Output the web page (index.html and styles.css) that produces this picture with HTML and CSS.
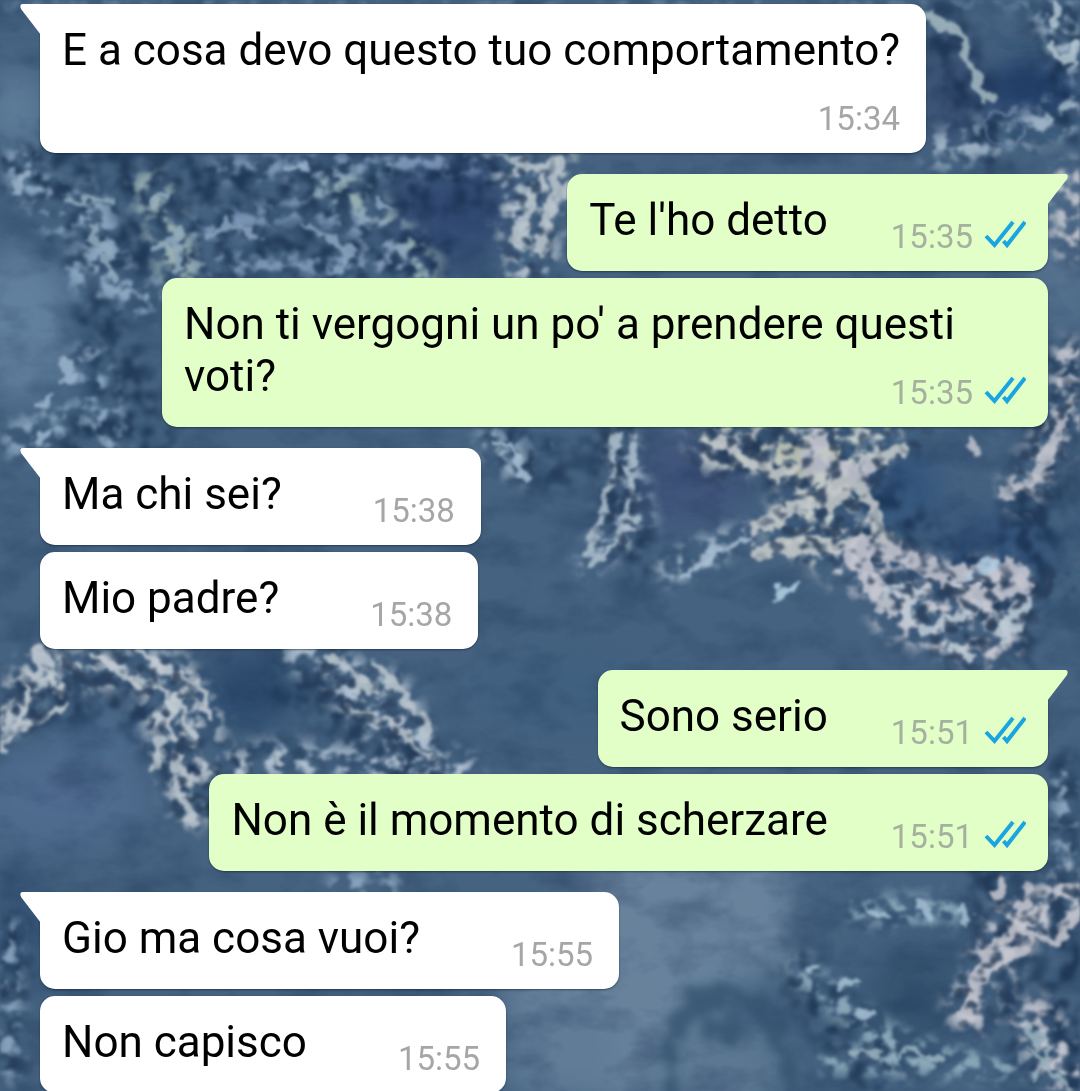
FILE: index.html
```html
<!DOCTYPE html>
<html lang="it">
<head>
<meta charset="utf-8">
<meta name="viewport" content="width=device-width, initial-scale=1">
<title>Chat</title>
<link rel="stylesheet" href="styles.css">
</head>
<body>
<svg class="wallpaper" viewBox="0 0 1080 1091" preserveAspectRatio="xMidYMid slice" aria-hidden="true">
  <defs>
    <filter id="soft" x="-30%" y="-30%" width="160%" height="160%"><feGaussianBlur stdDeviation="16"/></filter>
    <filter id="water" x="0" y="0" width="100%" height="100%" color-interpolation-filters="sRGB">
      <feTurbulence type="fractalNoise" baseFrequency="0.018 0.03" numOctaves="4" seed="4"/>
      <feColorMatrix values="0 0 0 0 0.09  0 0 0 0 0.18  0 0 0 0 0.32  2.6 0 0 0 -1.15"/>
    </filter>
    <filter id="flecks" filterUnits="userSpaceOnUse" x="0" y="0" width="1080" height="1091" color-interpolation-filters="sRGB">
      <feGaussianBlur in="SourceGraphic" stdDeviation="8" result="area"/>
      <feTurbulence type="fractalNoise" baseFrequency="0.06 0.07" numOctaves="3" seed="11"/>
      <feColorMatrix values="0 0 0 0 1  0 0 0 0 1  0 0 0 0 1  0 5.5 0 0 -2.6" result="mask"/>
      <feComposite in="area" in2="mask" operator="in"/>
      <feGaussianBlur stdDeviation="1.6"/>
    </filter>
    <filter id="shade" filterUnits="userSpaceOnUse" x="0" y="0" width="1080" height="1091" color-interpolation-filters="sRGB">
      <feGaussianBlur in="SourceGraphic" stdDeviation="10" result="area"/>
      <feTurbulence type="fractalNoise" baseFrequency="0.06 0.055" numOctaves="3" seed="29"/>
      <feColorMatrix values="0 0 0 0 1  0 0 0 0 1  0 0 0 0 1  0 4 0 0 -1.6" result="mask"/>
      <feComposite in="area" in2="mask" operator="in"/>
      <feGaussianBlur stdDeviation="2"/>
    </filter>
    <filter id="hollows" filterUnits="userSpaceOnUse" x="0" y="0" width="1080" height="1091" color-interpolation-filters="sRGB">
      <feGaussianBlur in="SourceGraphic" stdDeviation="8" result="area"/>
      <feTurbulence type="fractalNoise" baseFrequency="0.07 0.08" numOctaves="2" seed="52"/>
      <feColorMatrix values="0 0 0 0 1  0 0 0 0 1  0 0 0 0 1  0 7 0 0 -3.6" result="mask"/>
      <feComposite in="area" in2="mask" operator="in"/>
      <feGaussianBlur stdDeviation="1.6"/>
    </filter>
    <filter id="foam" filterUnits="userSpaceOnUse" x="0" y="0" width="1080" height="1091" color-interpolation-filters="sRGB">
      <feTurbulence type="fractalNoise" baseFrequency="0.06" numOctaves="3" seed="7" result="n"/>
      <feDisplacementMap in="SourceGraphic" in2="n" scale="24" xChannelSelector="R" yChannelSelector="G"/>
      <feGaussianBlur stdDeviation="1.8"/>
    </filter>
    <filter id="ring" x="-30%" y="-30%" width="160%" height="160%">
      <feTurbulence type="fractalNoise" baseFrequency="0.04" numOctaves="3" seed="3" result="n"/>
      <feDisplacementMap in="SourceGraphic" in2="n" scale="40" xChannelSelector="R" yChannelSelector="G"/>
      <feGaussianBlur stdDeviation="5"/>
    </filter>
  </defs>

  <rect width="1080" height="1091" fill="#456280"/>
  <g filter="url(#soft)">
    <ellipse cx="20" cy="325" rx="55" ry="75" fill="#61809d"/>
    <ellipse cx="15" cy="110" rx="35" ry="40" fill="#5c7b98"/>
    <ellipse cx="690" cy="480" rx="60" ry="50" fill="#40547a"/>
    <ellipse cx="450" cy="210" rx="60" ry="60" fill="#364d74"/>
    <ellipse cx="890" cy="490" rx="55" ry="45" fill="#34577d"/>
    <ellipse cx="1000" cy="550" rx="60" ry="40" fill="#34557a"/>
    <ellipse cx="1060" cy="260" rx="30" ry="90" fill="#55718e"/>
    <ellipse cx="1030" cy="90" rx="50" ry="25" fill="#243c6b"/>
    <ellipse cx="950" cy="90" rx="30" ry="60" fill="#3a5174"/>
    <ellipse cx="60" cy="800" rx="90" ry="50" fill="#506b8e"/>
    <ellipse cx="105" cy="740" rx="50" ry="28" fill="#4b6a8c"/>
    <ellipse cx="250" cy="690" rx="45" ry="40" fill="#294a6c"/>
    <ellipse cx="560" cy="690" rx="100" ry="50" fill="#40607f"/>
    <path d="M610 850H790L800 960L700 1000L660 1100H560L500 1000Z" fill="#67829c"/>
    <ellipse cx="730" cy="1070" rx="55" ry="55" fill="#5b7792"/>
    <ellipse cx="915" cy="1000" rx="50" ry="60" fill="#36526f"/>
    <ellipse cx="560" cy="1050" rx="60" ry="50" fill="#607c97"/>
    <ellipse cx="20" cy="920" rx="25" ry="60" fill="#365374"/>
  </g>
  <rect width="1080" height="1091" filter="url(#water)" opacity=".3"/>
  <path d="M670 1100Q655 1025 700 1003T775 1020L790 1100M705 1015L745 1040" fill="none" stroke="#36536f" stroke-width="16" opacity=".8" filter="url(#ring)"/>

  <g filter="url(#shade)" fill="none" stroke="#142b49" stroke-linecap="round" opacity=".7">
    <path d="M20 170L300 190L480 180M80 240L220 250L430 260M100 320L140 430L90 440" stroke-width="60"/>
    <path d="M10 700L130 700L210 800M290 680L420 770M190 760L300 770" stroke-width="46"/>
    <path d="M740 440L860 500L1010 620L1040 480" stroke-width="66"/>
    <path d="M600 440L640 560M500 440L560 470" stroke-width="40"/>
    <path d="M940 20L990 150M1060 20L1070 120" stroke-width="50"/>
    <path d="M990 880L1040 1080M800 970L870 1070M1070 900V1080" stroke-width="50"/>
    <path d="M1060 350L1060 430L1040 440M10 930V1080M1060 770V850" stroke-width="36"/>
  </g>

  <g filter="url(#flecks)" fill="none" stroke-linecap="round">
    <path d="M20 165L60 220M90 200L120 290M80 270L150 300M90 360L110 440M60 420L20 440" stroke="#8ca6c0" stroke-width="38"/>
    <path d="M150 190L180 270M330 180L420 265" stroke="#99b0b2" stroke-width="42"/>
    <path d="M200 230L310 205L390 240M220 170L480 160M210 265H400" stroke="#839cbd" stroke-width="24"/>
    <path d="M510 160L520 270M560 160L540 260" stroke="#b3c2cc" stroke-width="34"/>
    <path d="M0 720L40 670L170 670L205 720M160 710L190 810M200 750L235 775" stroke="#b9c4cd" stroke-width="40"/>
    <path d="M300 655L390 690L430 760M350 700L400 740M260 760L460 770" stroke="#b0c1d2" stroke-width="36"/>
    <path d="M490 440L520 470M620 440L640 520L590 560M670 570L730 540" stroke="#a9bccd" stroke-width="28"/>
    <path d="M720 440L850 450L800 520L860 560" stroke="#c3cbc9" stroke-width="66"/>
    <path d="M850 560L920 590L1000 590M900 610L990 640" stroke="#c6c7d0" stroke-width="60"/>
    <path d="M1070 360V420L1020 490M1070 180V240" stroke="#bcc0c8" stroke-width="42"/>
    <path d="M1050 10L1075 60M940 150L990 140M1030 130L1075 110" stroke="#9db2c4" stroke-width="38"/>
    <path d="M1075 890L1010 930L970 1010M1035 1020L1070 1080" stroke="#c2c5ce" stroke-width="50"/>
    <path d="M800 970L870 1030L940 1060M860 910L950 910M830 1060L1010 1065" stroke="#8eabbc" stroke-width="28"/>
    <path d="M8 930V1070M1065 775V860M340 885H390" stroke="#91abc4" stroke-width="24"/>
    <path d="M0 2H1080M480 440H560" stroke="#849eb9" stroke-width="8"/>
  </g>

  <g filter="url(#foam)" fill="none" stroke="#bac5cd" stroke-linecap="round" stroke-linejoin="round" opacity=".88">
    <path d="M926 15Q962 28 971 62T990 100" stroke="#a3b8c0" stroke-width="10"/>
    <path d="M990 112H1020V142H990Z" stroke="#6780a0" stroke-width="4"/>
    <path d="M1050 45L1070 62L1080 42M1053 0L1058 22" stroke="#b0c3cf" stroke-width="8"/>
    <path d="M520 165L545 168L528 210L514 242M558 168L548 215L543 250M550 158L568 195" stroke-width="11"/>
    <path d="M150 205L165 196M155 246L180 235L178 270M68 201H110M88 226L106 252L114 280" stroke="#91aabd" stroke-width="8"/>
    <path d="M205 241L225 224L260 238M308 224L350 250L335 270M374 201L390 212" stroke="#8ba4be" stroke-width="6"/>
    <path d="M0 746L25 718L22 682L50 670M25 726L65 707M35 650L62 690M95 655L130 680L178 704M172 704L174 738M180 704L194 736M140 655L205 690L207 720" stroke="#c3ccd4" stroke-width="8"/>
    <path d="M160 725L155 765M178 760V795L192 820" stroke-width="9"/>
    <path d="M330 655L375 695M350 706L390 724L430 760M380 668L420 714L428 732M275 752L280 762" stroke-width="8"/>
    <path d="M617 435L610 490L603 515M633 440L628 520M598 520L592 550M628 528L592 566" stroke="#adbfcc" stroke-width="8"/>
    <path d="M682 578L722 548L752 538M496 438L507 440L522 475" stroke="#a9c0d5" stroke-width="6"/>
    <path d="M720 443L758 466L812 478L875 462L905 448M758 526L795 510L848 480M830 505L862 480L885 545M760 550L840 545" stroke="#c5caca" stroke-width="15"/>
    <path d="M785 450L835 455L800 470" stroke="#c5cabb" stroke-width="20"/>
    <path d="M818 436L808 465L865 468M850 555L876 590L890 610L882 590L855 545L900 555L950 575L1010 570L1025 580L990 595L965 598" stroke="#c5c6d0" stroke-width="17"/>
    <path d="M885 590L915 592L910 620L935 630L978 605M1025 600L1006 640L1000 635ZM950 645L970 660" stroke="#becbd6" stroke-width="11"/>
    <path d="M780 595L796 582M976 573L995 562" stroke="#b5d0e4" stroke-width="9"/>
    <path d="M1065 420L1035 485L1000 492M1062 380H1080M1060 360L1078 350M968 440L975 450" stroke="#bec1cb" stroke-width="11"/>
    <path d="M1080 908L1055 940L1010 930L1030 890M998 895L1002 880M1040 905L1010 940L985 950L978 975L968 1015L985 960L1004 960L1028 945M1080 885L1062 892" stroke="#c5c6cf" stroke-width="11"/>
    <path d="M872 905L890 918M918 903L930 920M960 914L968 920M810 972L816 968M845 985L852 982M860 1008L866 1016" stroke="#a5bed3" stroke-width="9"/>
    <path d="M855 1053H880M895 1058L918 1050L940 1062M1024 1030L1040 1040M1030 1050L1065 1085M1050 1045L1035 1080" stroke="#99b2bf" stroke-width="6"/>
    <path d="M40 446L48 432M42 402L52 394M14 190L22 178M290 172L303 164M68 355V380" stroke="#9bb3cb" stroke-width="7"/>
  </g>

  <g filter="url(#hollows)" fill="none" stroke="#2b3f5a" stroke-linecap="round" opacity=".85">
    <path d="M720 450L870 460L800 530L880 560L930 600L1010 600L960 640" stroke-width="64"/>
    <path d="M1070 400L1030 480M1070 900L1000 930L970 1010M620 440V540" stroke-width="44"/>
    <path d="M20 720L60 670L170 680L190 800M330 670L420 750M530 170V260" stroke-width="44"/>
  </g>
</svg>

<main class="chat">
  <section class="group group-in">
    <article class="bubble tail">E a cosa devo questo tuo comportamento?<span class="meta"><time datetime="15:34">15:34</time></span></article>
  </section>
  <section class="group group-out">
    <article class="bubble tail">Te l'ho detto<span class="meta"><time datetime="15:35">15:35</time><svg class="ticks" viewBox="0 0 42 30" role="img" aria-label="Letto"><path d="M2 17L10.500 26L29 3M19.500 22L23 26L41 3"/></svg></span></article>
    <article class="bubble">Non ti vergogni un po' a prendere questi voti?<span class="meta"><time datetime="15:35">15:35</time><svg class="ticks" viewBox="0 0 42 30" role="img" aria-label="Letto"><path d="M2 17L10.500 26L29 3M19.500 22L23 26L41 3"/></svg></span></article>
  </section>
  <section class="group group-in">
    <article class="bubble tail">Ma chi sei?<span class="meta"><time datetime="15:38">15:38</time></span></article>
    <article class="bubble">Mio padre?<span class="meta"><time datetime="15:38">15:38</time></span></article>
  </section>
  <section class="group group-out">
    <article class="bubble tail">Sono serio<span class="meta"><time datetime="15:51">15:51</time><svg class="ticks" viewBox="0 0 42 30" role="img" aria-label="Letto"><path d="M2 17L10.500 26L29 3M19.500 22L23 26L41 3"/></svg></span></article>
    <article class="bubble">Non è il momento di scherzare<span class="meta"><time datetime="15:51">15:51</time><svg class="ticks" viewBox="0 0 42 30" role="img" aria-label="Letto"><path d="M2 17L10.500 26L29 3M19.500 22L23 26L41 3"/></svg></span></article>
  </section>
  <section class="group group-in">
    <article class="bubble tail">Gio ma cosa vuoi?<span class="meta"><time datetime="15:55">15:55</time></span></article>
    <article class="bubble">Non capisco<span class="meta"><time datetime="15:55">15:55</time></span></article>
  </section>
</main>
</body>
</html>
```
FILE: styles.css
```css
* {
  box-sizing: border-box;
}

body {
  margin: 0;
  background: #456280;
  color: #000;
  font-family: Roboto, "Liberation Sans", sans-serif;
}

body::-webkit-scrollbar {
  display: none;
}

.wallpaper {
  position: fixed;
  inset: 0;
  z-index: -1;
  width: 100%;
  height: 100%;
}

.chat {
  display: flex;
  flex-direction: column;
  gap: 21px;
  padding: 4px 32px 0 40px;
}

.group {
  display: flex;
  flex-direction: column;
  align-items: flex-start;
  gap: 7px;
}

.group-out {
  align-items: flex-end;
}

.bubble {
  position: relative;
  max-width: calc(100% - 122px);
  padding: 20px 22px 25px;
  border-radius: 15px;
  background: #fff;
  box-shadow: 0 1px 2px rgba(10, 25, 45, 0.5);
  font-size: 44px;
  line-height: 52px;
}

.group-out .bubble {
  background: #e1ffc7;
}

.group-in .tail {
  border-top-left-radius: 0;
}

.group-out .tail {
  border-top-right-radius: 0;
}

/* Corner that points at the sender's side */
.tail::before {
  content: "";
  position: absolute;
  top: 0;
  left: -20px;
  width: 21px;
  height: 31px;
  background: inherit;
  clip-path: path("M3 0H21V31L1 5Q-1 0 3 0Z");
}

.group-out .tail::before {
  right: -20px;
  left: auto;
  clip-path: path("M18 0H0V31L20 5Q22 0 18 0Z");
}

/* Sits beside the last line of text, or below it when there is no room */
.meta {
  float: right;
  display: flex;
  align-items: center;
  gap: 11px;
  margin: 23px 4px -11px 91px;
  color: #a6a6a6;
  font-size: 33px;
  line-height: 40px;
}

.group-out .meta {
  margin-right: 0;
  margin-left: 63px;
  color: #a6b09f;
}

.ticks {
  width: 42px;
  height: 30px;
  margin-bottom: 6px;
  fill: none;
  stroke: #18a5e0;
  stroke-width: 4;
}
```
